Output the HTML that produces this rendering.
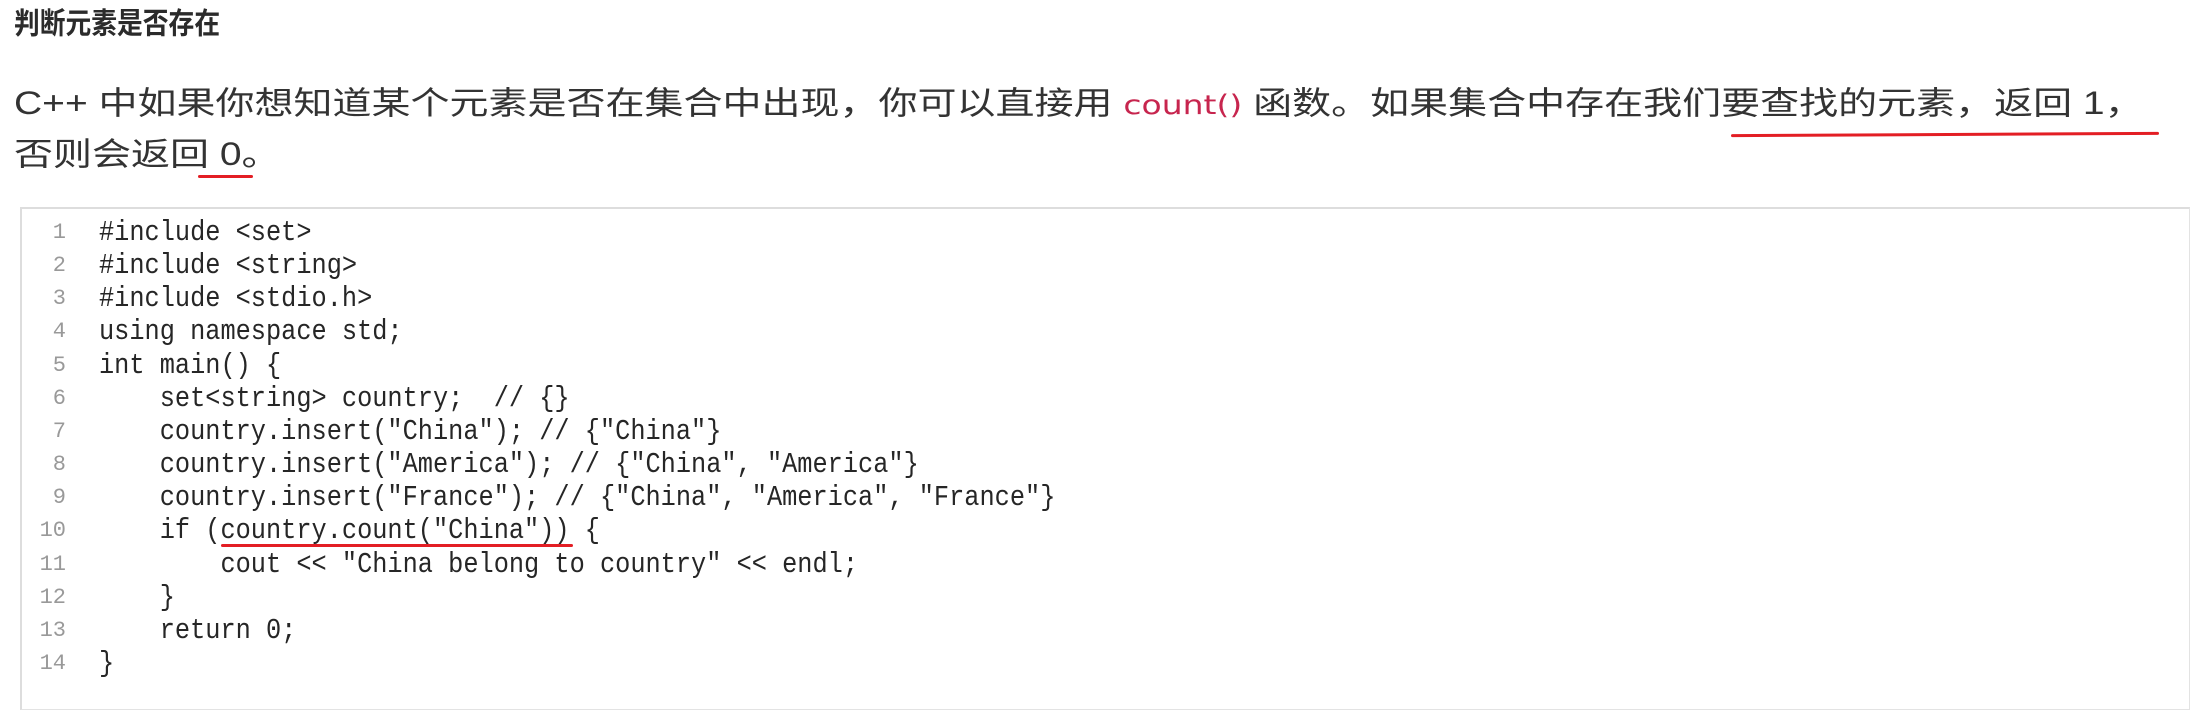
<!DOCTYPE html>
<html><head><meta charset="utf-8"><style>
html,body{margin:0;padding:0;background:#fff;}
body{width:2207px;height:685px;position:relative;overflow:hidden;font-family:"Liberation Sans","Noto Sans CJK SC",sans-serif;color:#333;}
.t{position:absolute;white-space:pre;}
.title{left:14px;top:3px;font-size:28px;font-weight:bold;line-height:42px;transform:scale(.92,1.05);transform-origin:left center;color:#2b2b2b;}
.p{left:14px;font-size:39px;line-height:50px;letter-spacing:0;transform:scaleY(.82);transform-origin:left center;color:#333;}
.cnt{font-family:"DejaVu Sans","Liberation Sans",sans-serif;color:#c7254e;font-size:33px;letter-spacing:0;}
.box{position:absolute;left:20px;top:207px;width:2167px;height:500px;border:1px solid #e3e3e3;border-left:2px solid #ddd;border-top:2px solid #ddd;background:#fff;}
.ln{position:absolute;width:50px;left:16px;text-align:right;font-family:"Liberation Mono",monospace;font-size:22px;color:#999;line-height:33px;}
.c{position:absolute;left:99px;font-family:"Liberation Mono",monospace;font-size:25.3px;color:#262626;line-height:33px;white-space:pre;transform:scaleY(1.12);transform-origin:left center;}
.u{position:absolute;height:3px;background:#e31e24;border-radius:2px;}
</style></head><body>
<div class="t title">判断元素是否存在</div>
<div class="t p" style="top:79px">C++ 中如果你想知道某个元素是否在集合中出现，你可以直接用 <span class="cnt">count()</span> 函数。如果集合中存在我们要查找的元素，返回 1，</div>
<div class="t p" style="top:130px">否则会返回 0。</div>
<div class="u" style="left:1731px;width:428px;top:133px;transform:rotate(-0.3deg)"></div>
<div class="u" style="left:198px;width:55px;top:175px"></div>
<div class="box"></div>
<div class="ln" style="top:216px">1</div><div class="c" style="top:216px">#include &lt;set&gt;</div>
<div class="ln" style="top:249px">2</div><div class="c" style="top:249px">#include &lt;string&gt;</div>
<div class="ln" style="top:282px">3</div><div class="c" style="top:282px">#include &lt;stdio.h&gt;</div>
<div class="ln" style="top:315px">4</div><div class="c" style="top:315px">using namespace std;</div>
<div class="ln" style="top:349px">5</div><div class="c" style="top:349px">int main() {</div>
<div class="ln" style="top:382px">6</div><div class="c" style="top:382px">    set&lt;string&gt; country;  // {}</div>
<div class="ln" style="top:415px">7</div><div class="c" style="top:415px">    country.insert("China"); // {"China"}</div>
<div class="ln" style="top:448px">8</div><div class="c" style="top:448px">    country.insert("America"); // {"China", "America"}</div>
<div class="ln" style="top:481px">9</div><div class="c" style="top:481px">    country.insert("France"); // {"China", "America", "France"}</div>
<div class="ln" style="top:514px">10</div><div class="c" style="top:514px">    if (country.count("China")) {</div>
<div class="ln" style="top:548px">11</div><div class="c" style="top:548px">        cout &lt;&lt; "China belong to country" &lt;&lt; endl;</div>
<div class="ln" style="top:581px">12</div><div class="c" style="top:581px">    }</div>
<div class="ln" style="top:614px">13</div><div class="c" style="top:614px">    return 0;</div>
<div class="ln" style="top:647px">14</div><div class="c" style="top:647px">}</div>
<div class="u" style="left:221px;width:352px;top:544px"></div>
</body></html>
